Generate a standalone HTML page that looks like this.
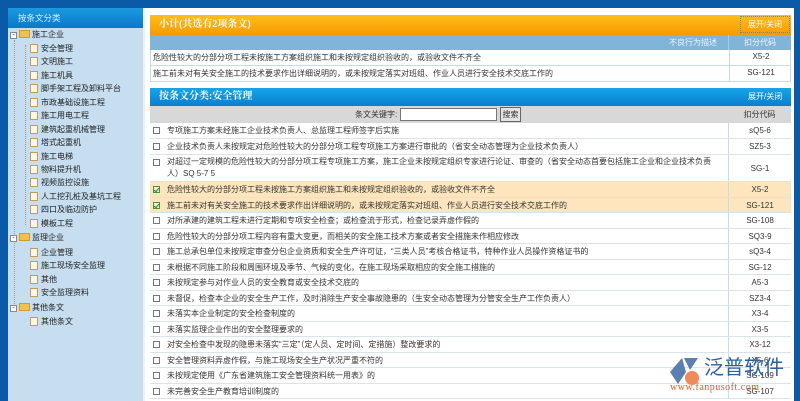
<!DOCTYPE html>
<html><head><meta charset="utf-8"><style>
*{margin:0;padding:0;box-sizing:border-box}
body{width:800px;height:401px;overflow:hidden;background:#fff;font-family:"Liberation Sans","Noto Sans CJK SC",sans-serif;font-size:8px;color:#333;position:relative}
.a{position:absolute}
.tree div{position:absolute;left:0;height:13px;line-height:13px;white-space:nowrap;font-size:8px;color:#222}
.ic{display:inline-block;width:8px;height:9px;border:1px solid #c89a60;background:#fff8e8;vertical-align:-2px;margin-right:3px}
.fd{display:inline-block;width:11px;height:8px;background:#f0c050;border:1px solid #d09a30;vertical-align:-1px;margin-right:2px}
.pm{display:inline-block;width:7px;height:7px;border:1px solid #888;background:#fff;vertical-align:0;margin-right:2px;font-size:7px;line-height:5px;text-align:center}
.row{position:absolute;left:150px;width:641px;border-bottom:1px solid #d8e4ee;background:#fff}
.row .t{position:absolute;left:17px;top:0;width:555px;line-height:13px;padding-top:1px;white-space:nowrap}
.row .c{position:absolute;left:578px;top:0;width:63px;height:100%;border-left:1px solid #c9d9e6;text-align:center}
.cb{position:absolute;left:3px;width:7px;height:7px;border:1px solid #777;background:#fff}
.row.s{background:#fde6bd}
.row.s .cb{border-color:#5a8a3a;background:#e6f4dc}
.row.s .cb:after{content:"";position:absolute;left:1px;top:0;width:2px;height:4px;border:solid #2d7a1a;border-width:0 1.5px 1.5px 0;transform:rotate(40deg)}
</style></head><body>
<div class="a" style="left:0;top:0;width:800px;height:8px;background:#0a5aa8"></div>
<div class="a" style="left:0;top:0;width:8px;height:401px;background:#0a5aa8"></div>
<div class="a" style="left:794px;top:0;width:6px;height:401px;background:#0a5aa8"></div>
<div class="a" style="left:8px;top:8px;width:135px;height:393px;background:#c6def0"></div>
<div class="a" style="left:8px;top:8px;width:135px;height:20px;background:linear-gradient(#1a9ae0,#0b78c8);color:#d8ecff;font-size:8.5px;line-height:20px;padding-left:10px">按条文分类</div>
<div class="a" style="left:143px;top:8px;width:2px;height:393px;background:#e8f2fa"></div>
<div class="a" style="left:14px;top:40px;width:1px;height:270px;border-left:1px dotted #999"></div>
<div class="a" style="left:25px;top:45px;width:1px;height:180px;border-left:1px dotted #999"></div>
<div class="tree a" style="left:10px;top:0;width:133px;height:401px">
<div style="top:28px"><span class="pm">-</span><span class="fd"></span>施工企业</div>
<div style="top:42px;left:20px"><span class="ic"></span>安全管理</div>
<div style="top:55px;left:20px"><span class="ic"></span>文明施工</div>
<div style="top:69px;left:20px"><span class="ic"></span>施工机具</div>
<div style="top:82px;left:20px"><span class="ic"></span>脚手架工程及卸料平台</div>
<div style="top:96px;left:20px"><span class="ic"></span>市政基础设施工程</div>
<div style="top:109px;left:20px"><span class="ic"></span>施工用电工程</div>
<div style="top:123px;left:20px"><span class="ic"></span>建筑起重机械管理</div>
<div style="top:136px;left:20px"><span class="ic"></span>塔式起重机</div>
<div style="top:150px;left:20px"><span class="ic"></span>施工电梯</div>
<div style="top:163px;left:20px"><span class="ic"></span>物料提升机</div>
<div style="top:176px;left:20px"><span class="ic"></span>视频监控设施</div>
<div style="top:190px;left:20px"><span class="ic"></span>人工挖孔桩及基坑工程</div>
<div style="top:203px;left:20px"><span class="ic"></span>四口及临边防护</div>
<div style="top:217px;left:20px"><span class="ic"></span>模板工程</div>
<div style="top:231px"><span class="pm">-</span><span class="fd"></span>监理企业</div>
<div style="top:246px;left:20px"><span class="ic"></span>企业管理</div>
<div style="top:259px;left:20px"><span class="ic"></span>施工现场安全监理</div>
<div style="top:273px;left:20px"><span class="ic"></span>其他</div>
<div style="top:286px;left:20px"><span class="ic"></span>安全监理资料</div>
<div style="top:301px"><span class="pm">-</span><span class="fd"></span>其他条文</div>
<div style="top:315px;left:20px"><span class="ic"></span>其他条文</div>
</div>

<div class="a" style="left:150px;top:15px;width:641px;height:20px;background:linear-gradient(#ffbe1a,#f59a00);color:#fff;font-family:'Liberation Serif','Noto Serif CJK SC',serif;font-weight:bold;font-size:10px;line-height:20px;padding-left:9px">小计(共选有2项条文)</div>
<div class="a" style="left:740px;top:16px;width:50px;height:17px;border:1px dotted #886;color:#fff;line-height:15px;text-align:center">展开/关闭</div>
<div class="a" style="left:150px;top:35px;width:641px;height:15px;background:#80b4d8;color:#eef6ff;line-height:15px">
<span class="a" style="left:0;width:578px;text-align:right;padding-right:11px">不良行为描述</span>
<span class="a" style="left:578px;width:63px;text-align:center;color:#f4f8ff;border-left:1px solid #a8cce6;height:15px">扣分代码</span></div>
<div class="row" style="top:50px;height:16px;border:1px solid #c9d9e6;border-top:0"><span class="t" style="left:2px">危险性较大的分部分项工程未按施工方案组织施工和未按规定组织验收的，或验收文件不齐全</span><span class="c" style="line-height:14px">X5-2</span></div>
<div class="row" style="top:66px;height:16px;border:1px solid #c9d9e6;border-top:0"><span class="t" style="left:2px">施工前未对有关安全施工的技术要求作出详细说明的，或未按规定落实对班组、作业人员进行安全技术交底工作的</span><span class="c" style="line-height:14px">SG-121</span></div>

<div class="a" style="left:150px;top:88px;width:641px;height:18px;background:linear-gradient(#16a4e8,#0a7fcf);color:#fff;font-family:'Liberation Serif','Noto Serif CJK SC',serif;font-weight:bold;font-size:10px;line-height:18px;padding-left:9px">按条文分类:安全管理</div>
<div class="a" style="left:748px;top:88px;color:#fff;line-height:18px">展开/关闭</div>
<div class="a" style="left:150px;top:106px;width:641px;height:17px;background:#d8d8d8"></div>
<div class="a" style="left:355px;top:106px;line-height:17px;color:#333">条文关键字:</div>
<div class="a" style="left:400px;top:108px;width:97px;height:13px;background:#fff;border:1px solid #777"></div>
<div class="a" style="left:500px;top:107px;width:21px;height:15px;background:#e4e4e4;border:1px solid #666;line-height:13px;text-align:center">搜索</div>
<div class="a" style="left:728px;top:106px;width:63px;height:17px;line-height:17px;text-align:center">扣分代码</div>

<div class="row" style="top:123px;height:16px"><i class="cb" style="top:4px"></i><span class="t">专项施工方案未经施工企业技术负责人、总监理工程师签字后实施</span><span class="c" style="line-height:16px">sQ5-6</span></div>
<div class="row" style="top:139px;height:16px"><i class="cb" style="top:4px"></i><span class="t">企业技术负责人未按规定对危险性较大的分部分项工程专项施工方案进行审批的（省安全动态管理为企业技术负责人）</span><span class="c" style="line-height:16px">SZ5-3</span></div>
<div class="row" style="top:155px;height:27px"><i class="cb" style="top:4px"></i><span class="t" style="white-space:normal;line-height:12px">对超过一定规模的危险性较大的分部分项工程专项施工方案，施工企业未按规定组织专家进行论证、审查的（省安全动态首要包括施工企业和企业技术负责人）SQ 5-7 5</span><span class="c" style="line-height:27px">SG-1</span></div>
<div class="row s" style="top:182px;height:15.5px"><i class="cb" style="top:4px"></i><span class="t">危险性较大的分部分项工程未按施工方案组织施工和未按规定组织验收的，或验收文件不齐全</span><span class="c" style="line-height:15px">X5-2</span></div>
<div class="row s" style="top:197.5px;height:15.5px"><i class="cb" style="top:4px"></i><span class="t">施工前未对有关安全施工的技术要求作出详细说明的，或未按规定落实对班组、作业人员进行安全技术交底工作的</span><span class="c" style="line-height:15px">SG-121</span></div>
<div class="row" style="top:213px;height:15.5px"><i class="cb" style="top:4px"></i><span class="t">对所承建的建筑工程未进行定期和专项安全检查；或检查流于形式，检查记录弄虚作假的</span><span class="c" style="line-height:15px">SG-108</span></div>
<div class="row" style="top:228.5px;height:15.5px"><i class="cb" style="top:4px"></i><span class="t">危险性较大的分部分项工程内容有重大变更，而相关的安全施工技术方案或者安全措施未作相应修改</span><span class="c" style="line-height:15px">SQ3-9</span></div>
<div class="row" style="top:244px;height:15.5px"><i class="cb" style="top:4px"></i><span class="t">施工总承包单位未按规定审查分包企业资质和安全生产许可证，“三类人员”考核合格证书，特种作业人员操作资格证书的</span><span class="c" style="line-height:15px">sQ3-4</span></div>
<div class="row" style="top:259.5px;height:15.5px"><i class="cb" style="top:4px"></i><span class="t">未根据不同施工阶段和周围环境及季节、气候的变化，在施工现场采取相应的安全施工措施的</span><span class="c" style="line-height:15px">SG-12</span></div>
<div class="row" style="top:275px;height:15.5px"><i class="cb" style="top:4px"></i><span class="t">未按规定参与对作业人员的安全教育或安全技术交底的</span><span class="c" style="line-height:15px">A5-3</span></div>
<div class="row" style="top:290.5px;height:15.5px"><i class="cb" style="top:4px"></i><span class="t">未督促，检查本企业的安全生产工作，及时消除生产安全事故隐患的（生安全动态管理为分管安全生产工作负责人）</span><span class="c" style="line-height:15px">SZ3-4</span></div>
<div class="row" style="top:306px;height:15.5px"><i class="cb" style="top:4px"></i><span class="t">未落实本企业制定的安全检查制度的</span><span class="c" style="line-height:15px">X3-4</span></div>
<div class="row" style="top:321.5px;height:15.5px"><i class="cb" style="top:4px"></i><span class="t">未落实监理企业作出的安全整理要求的</span><span class="c" style="line-height:15px">X3-5</span></div>
<div class="row" style="top:337px;height:15.5px"><i class="cb" style="top:4px"></i><span class="t">对安全检查中发现的隐患未落实“三定”（定人员、定时间、定措施）整改要求的</span><span class="c" style="line-height:15px">X3-12</span></div>
<div class="row" style="top:352.5px;height:15.5px"><i class="cb" style="top:4px"></i><span class="t">安全管理资料弄虚作假，与施工现场安全生产状况严重不符的</span><span class="c" style="line-height:15px">X5-6</span></div>
<div class="row" style="top:368px;height:15.5px"><i class="cb" style="top:4px"></i><span class="t">未按规定使用《广东省建筑施工安全管理资料统一用表》的</span><span class="c" style="line-height:15px">SG-109</span></div>
<div class="row" style="top:383.5px;height:15.5px"><i class="cb" style="top:4px"></i><span class="t">未完善安全生产教育培训制度的</span><span class="c" style="line-height:15px">SG-107</span></div>

<svg class="a" style="left:668px;top:356px" width="34" height="30" viewBox="0 0 34 30"><path d="M14 2 L2 16 L10 28 L18 16 Z" fill="#5a7fb0"/><path d="M16 2 L30 2 L22 14 Z" fill="#5a7fb0"/><circle cx="24" cy="22" r="7" fill="#f08a5a"/></svg>
<div class="a" style="left:704px;top:356px;font-size:20px;color:#2d5f9e;font-family:'Liberation Sans','Noto Sans CJK SC',sans-serif;line-height:24px">泛普软件</div>
<div class="a" style="left:670px;top:382px;font-size:10px;color:#e05a2a;font-family:'Liberation Serif',serif;letter-spacing:0.5px">www.fanpusoft.com</div>
</body></html>
